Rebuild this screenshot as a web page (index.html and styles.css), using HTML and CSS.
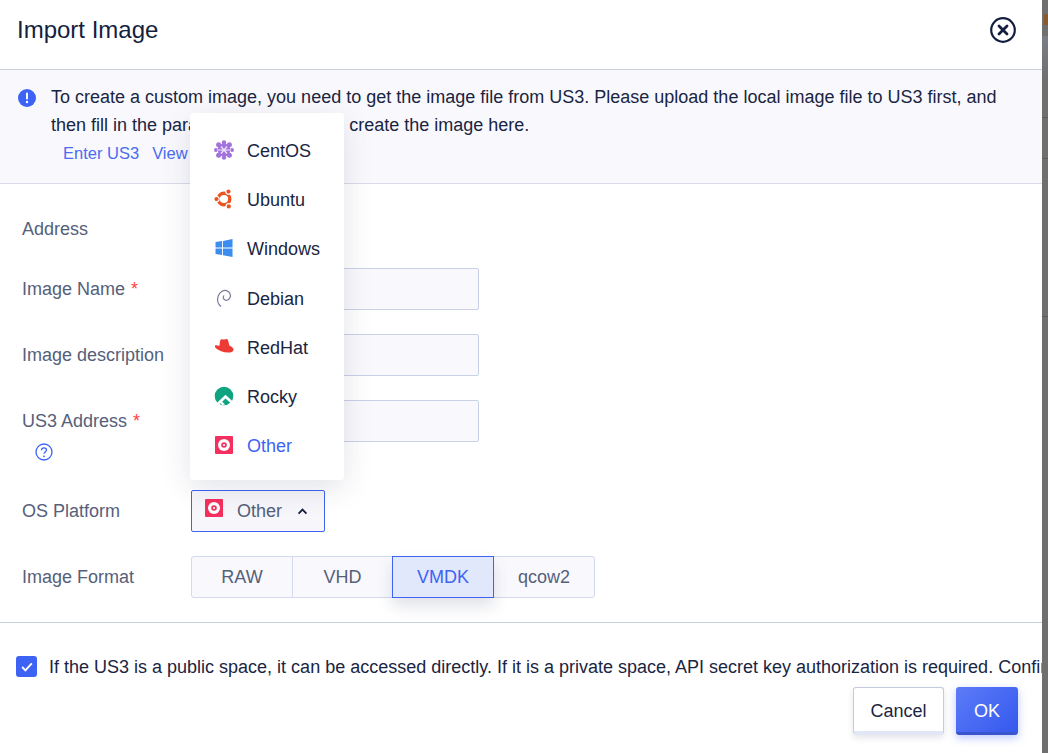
FILE: index.html
```html
<!DOCTYPE html>
<html lang="en">
<head>
<meta charset="utf-8">
<title>Import Image</title>
<link rel="stylesheet" href="styles.css">
</head>
<body>
<div class="screen">
  <main class="dialog">
    <header class="head">
      <h1 class="title">Import Image</h1>
      <svg class="close" viewBox="0 0 26 26" width="26" height="26"><circle cx="13" cy="13" r="11.800" fill="none" stroke="#141f3f" stroke-width="2.200"/><path d="M9 9l8 8M17 9l-8 8" stroke="#141f3f" stroke-width="2.800" stroke-linecap="round"/></svg>
    </header>
    <section class="notice">
      <svg class="notice-icon" viewBox="0 0 18 18" width="18" height="18"><circle cx="9" cy="9" r="9" fill="#3d63f5"/><rect x="8" y="3.600" width="2" height="7" rx="1" fill="#fff"/><circle cx="9" cy="13" r="1.200" fill="#fff"/></svg>
      <div class="notice-body">
        <p class="notice-text">To create a custom image, you need to get the image file from US3. Please upload the local image file to US3 first, and then fill in the parameters required to create the image here.</p>
        <p class="notice-links"><a>Enter US3</a><a>View Guide</a></p>
      </div>
    </section>
    <form class="form">
      <div class="row row-address"><div class="label">Address</div></div>
      <div class="row"><div class="label">Image Name <span class="req">*</span></div><div class="input"></div></div>
      <div class="row"><div class="label">Image description</div><div class="input"></div></div>
      <div class="row row-tall">
        <div class="label">US3 Address <span class="req">*</span>
          <svg class="help" viewBox="0 0 18 18" width="18" height="18"><circle cx="9" cy="9" r="8" fill="none" stroke="#3d63f5" stroke-width="1.300"/><path d="M6.500 7.200c0-1.500 1.100-2.400 2.500-2.400s2.500.9 2.500 2.200c0 1.900-2.500 1.900-2.500 3.800" fill="none" stroke="#3d63f5" stroke-width="1.300"/><circle cx="9" cy="13.300" r=".9" fill="#3d63f5"/></svg>
        </div>
        <div class="input"></div>
      </div>
      <div class="row">
        <div class="label">OS Platform</div>
        <div class="select">
          <svg class="os" viewBox="0 0 18 18" width="18" height="18"><rect width="18" height="18" rx="1" fill="#f5305e"/><circle cx="9" cy="9" r="6" fill="#fff"/><circle cx="9" cy="9" r="2.800" fill="#f5305e"/><circle cx="9" cy="9" r="1.100" fill="#fff"/></svg>
          <span class="select-text">Other</span>
          <svg class="chev" viewBox="0 0 12 8" width="11" height="7"><path d="M1.500 6.400L6 1.800l4.500 4.600" fill="none" stroke="#141f3f" stroke-width="2"/></svg>
        </div>
      </div>
      <div class="row">
        <div class="label">Image Format</div>
        <div class="segments">
          <div class="seg seg-first">RAW</div><div class="seg">VHD</div><div class="seg seg-on">VMDK</div><div class="seg seg-last">qcow2</div>
        </div>
      </div>
    </form>
    <footer class="foot">
      <div class="confirm">
        <span class="check"><svg viewBox="0 0 12 10" width="12" height="10"><path d="M1.200 5l3.200 3.400L10.800 1.400" fill="none" stroke="#fff" stroke-width="1.900"/></svg></span>
        <span class="confirm-text">If the US3 is a public space, it can be accessed directly. If it is a private space, API secret key authorization is required. Confirm</span>
      </div>
      <div class="actions">
        <button type="button" class="btn btn-cancel">Cancel</button>
        <button type="button" class="btn btn-ok">OK</button>
      </div>
    </footer>
    <ul class="menu">
      <li class="item"><svg viewBox="0 0 20 20" width="20" height="20"><g fill="#a273dc"><circle cx="10" cy="2.400" r="2.200"/><circle cx="10" cy="17.600" r="2.200"/><circle cx="1.900" cy="10" r="1.900"/><circle cx="18.100" cy="10" r="1.900"/><circle cx="4.600" cy="4.800" r="2.500"/><circle cx="15.400" cy="4.800" r="2.500"/><circle cx="4.600" cy="15.200" r="2.500"/><circle cx="15.400" cy="15.200" r="2.500"/><circle cx="10" cy="10" r="6.400"/></g><path d="M3 10h14M7 6.500l6 7M13 6.500l-6 7" stroke="#efe6fa" stroke-width="1.200"/></svg><span>CentOS</span></li>
      <li class="item"><svg viewBox="0 0 20 20" width="20" height="20"><circle cx="10" cy="10" r="5.800" fill="none" stroke="#e95420" stroke-width="3.400"/><g fill="#e95420" stroke="#fff" stroke-width="1.200"><circle cx="2.500" cy="10" r="2.700"/><circle cx="14.500" cy="2.600" r="2.700"/><circle cx="14.800" cy="17.400" r="2.700"/></g></svg><span>Ubuntu</span></li>
      <li class="item"><svg viewBox="0 0 20 20" width="20" height="20"><path d="M1.500 4.100l6.600-1v6.400H1.500zM9 2.900L18.500 1v8.500H9zM1.500 10.500h6.600v6.400l-6.600-1zM9 10.500h9.500V19L9 17.200z" fill="#3b8def"/></svg><span>Windows</span></li>
      <li class="item"><svg viewBox="0 0 20 20" width="20" height="20"><path d="M7 18.500C4 16 2.800 12 4.200 8 5.600 4.200 9.500 1.600 12.600 2.600c3.200 1 4.600 4.200 3.400 7-1 2.400-3.600 3.400-5.400 2.200-1.600-1-1.800-3.200-.4-4.400" fill="none" stroke="#7d7a9c" stroke-width="1.200"/></svg><span>Debian</span></li>
      <li class="item"><svg viewBox="0 0 20 20" width="20" height="20"><path d="M5.500 8.800C5.800 6.300 6 3.800 6.800 2.600 7.600 1.700 8.800 2.400 10.400 2.400c1.400 0 2.400-.8 3.200.2.800 1.200 1.200 3.800 1.900 6.200 1.700.6 4 2 4 3.900 0 2.100-2.500 2.900-5.500 2.900-4.700 0-9.500-2-12.400-4.700C.8 10.100.8 8.600 1.600 8c1.100.5 2.400.8 3.900.8z" fill="#ee3a34"/></svg><span>RedHat</span></li>
      <li class="item"><svg viewBox="0 0 20 20" width="20" height="20"><circle cx="10" cy="10" r="9.300" fill="#10a37f"/><path d="M3.300 16.500L11.500 8.800l6.800 6.200-1.500 2.200-5.300-4.700-3.300 3.200 2.900 2.700-3 .6-1.800-1.700-1.500 1.300z" fill="#fff"/></svg><span>Rocky</span></li>
      <li class="item item-on"><svg viewBox="0 0 18 18" width="18" height="18"><rect width="18" height="18" rx="1" fill="#f5305e"/><circle cx="9" cy="9" r="6" fill="#fff"/><circle cx="9" cy="9" r="2.800" fill="#f5305e"/><circle cx="9" cy="9" r="1.100" fill="#fff"/></svg><span>Other</span></li>
    </ul>
  </main>
  <div class="strip"></div>
</div>
</body>
</html>
```
FILE: styles.css
```css
* { box-sizing: border-box; }
html, body { margin: 0; height: 100%; overflow: hidden; }
body { font-family: "Liberation Sans", Arial, sans-serif; color: #1a2542; background: #6f6f6f; }
p, h1, ul { margin: 0; padding: 0; }
.screen { display: flex; width: 1048px; height: 753px; }
.dialog { position: relative; width: 1042px; height: 753px; background: #fff; overflow: hidden; flex: none; }
.strip {
  width: 6px;
  height: 753px;
  background:
    linear-gradient(#5e5e5e, #5e5e5e) 0 117px / 6px 1px no-repeat,
    linear-gradient(#5e5e5e, #5e5e5e) 0 158px / 6px 1px no-repeat,
    linear-gradient(#5e5e5e, #5e5e5e) 0 316px / 6px 1px no-repeat,
    linear-gradient(#8a5a2a, #8a5a2a) 2px 14px / 4px 11px no-repeat,
    linear-gradient(#7b7d86, #6f6f6f) 0 36px / 6px 45px no-repeat,
    #6f6f6f;
}
.head { height: 69px; display: flex; align-items: center; justify-content: space-between; padding: 0 26px 9px 17px; }
.title { font-size: 24px; font-weight: 400; color: #141f3f; line-height: 30px; }
.close { display: block; }
.notice { height: 115px; background: #f9f9fd; border-top: 1px solid #c9cedd; border-bottom: 1px solid #d9dce6; padding: 13px 17px 0 18px; display: flex; gap: 15px; }
.notice-icon { margin-top: 6px; flex: none; }
.notice-text { font-size: 18px; line-height: 28px; width: 960px; }
.notice-links { font-size: 16.500px; line-height: 28px; color: #4a6cf0; padding-left: 12px; display: flex; gap: 13px; }
.form { padding: 24px 0 0 22px; display: flex; flex-direction: column; gap: 24px; }
.row { display: flex; height: 42px; }
.row-address { height: 36px; }
.row-tall { height: 66px; }
.label { width: 169px; flex: none; font-size: 18px; line-height: 42px; color: #55607a; }
.req { color: #f44; font-size: 18px; line-height: 1; margin-left: 1px; }
.help { display: block; margin: 1px 0 0 13px; }
.input { width: 288px; height: 42px; background: #f9f9fd; border: 1px solid #c9d1e8; border-radius: 2px; }
.select { width: 134px; height: 42px; background: #f6f6fb; border: 1px solid #3d63f5; border-radius: 2px; display: flex; align-items: center; padding: 0 0 0 13px; }
.os { margin-top: -6px; flex: none; }
.select-text { font-size: 18px; color: #55607a; margin-left: 14px; }
.chev { margin-left: 15px; }
.segments { display: flex; height: 42px; width: 404px; background: #f9f9fd; border: 1px solid #d3d9ee; border-radius: 3px; font-size: 18px; color: #55607a; }
.seg { width: 100px; display: flex; align-items: center; justify-content: center; border-right: 1px solid #d3d9ee; flex: none; }
.seg-first { width: 101px; }
.seg-on { width: 102px; margin: -1px 0 -1px -1px; background: #e1e8fc; color: #3d63f5; border: 1px solid #3d63f5; box-shadow: 0 8px 16px rgba(30, 40, 80, .14); position: relative; }
.seg-last { border-right: 0; flex: 1; }
.foot { margin-top: 24px; border-top: 1px solid #c9cedd; padding: 33px 0 0 16px; }
.confirm { display: flex; align-items: center; gap: 12px; white-space: nowrap; height: 21px; }
.check { width: 21px; height: 21px; background: #3d63f5; border-radius: 3px; display: flex; align-items: center; justify-content: center; flex: none; }
.confirm-text { font-size: 18px; line-height: 21px; margin-top: 1px; }
.actions { display: flex; justify-content: flex-end; gap: 12px; padding: 10px 24px 0 0; }
.btn { height: 48px; font: 18px "Liberation Sans", Arial, sans-serif; border-radius: 3px; padding: 3px 0 0; }
.btn-cancel { width: 91px; background: #fff; color: #1a2542; border: 1px solid #c5cbdc; border-bottom: 4px solid #e2e7f6; box-shadow: 0 3px 6px rgba(30, 40, 80, .12); }
.btn-ok { width: 62px; background: linear-gradient(135deg, #5c7cf8, #3558ee); color: #fff; border: 0; border-bottom: 3px solid #3a55cc; box-shadow: 0 3px 8px rgba(61, 99, 245, .35); }
.menu { position: absolute; left: 190px; top: 113px; width: 154px; height: 367px; background: #fff; border-radius: 3px; list-style: none; padding: 13.500px 0 0 24px; box-shadow: 0 8px 30px rgba(30, 40, 80, .13); display: flex; flex-direction: column; }
.item { height: 49.300px; flex: none; display: flex; align-items: center; gap: 13px; font-size: 18px; color: #1a2542; }
.item svg { flex: none; width: 20px; margin-top: -3px; }
.item-on { color: #3d63f5; }
```
